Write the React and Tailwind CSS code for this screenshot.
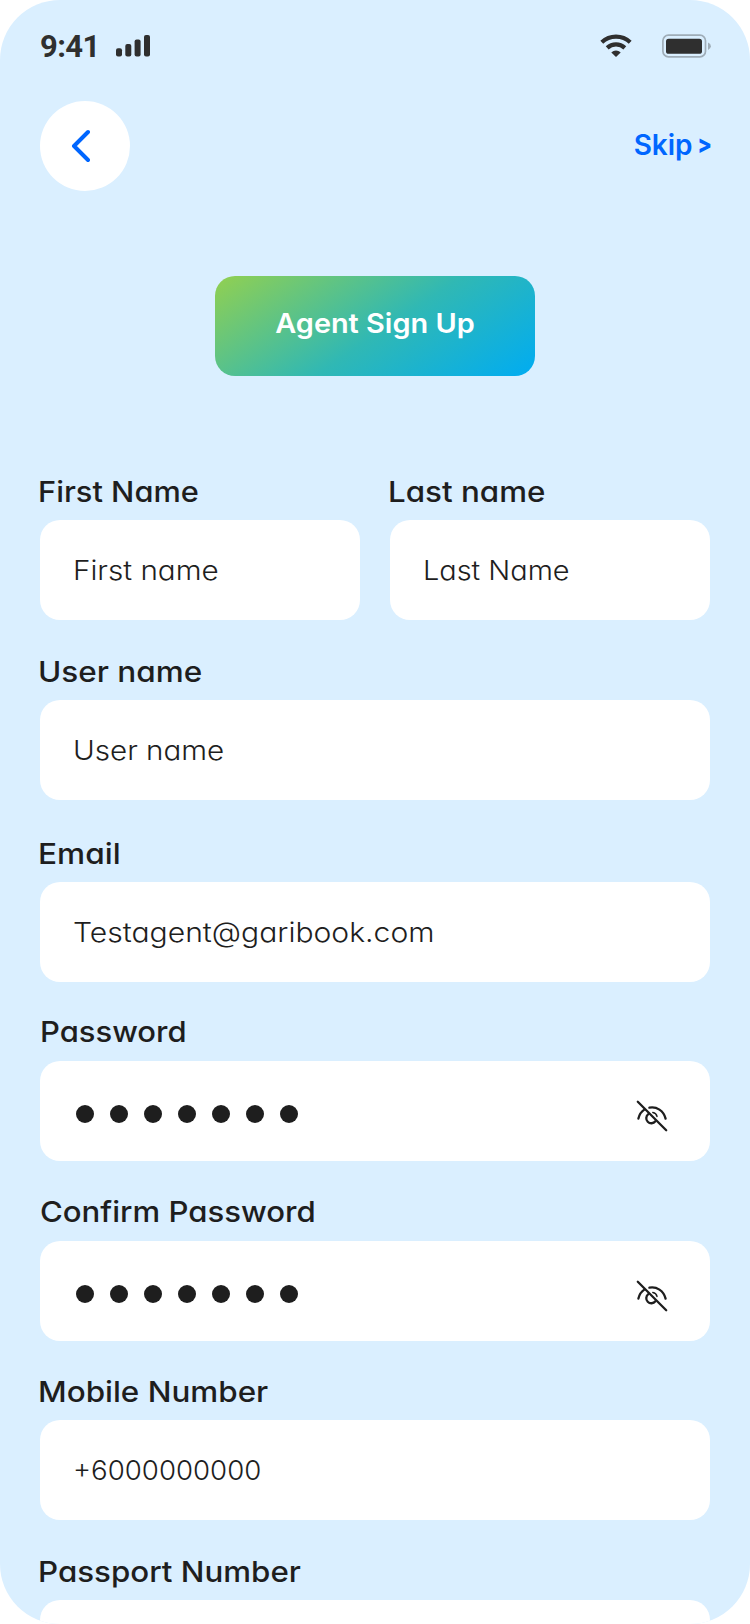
function StatusBar() {
  return (
    <header className="flex h-[46px] items-center justify-between text-[#2f2f2f]">
      <div className="flex items-center">
        <span className="w-[76px] font-['Roboto',sans-serif] text-[31px] font-bold leading-none tracking-[-0.6px]">9:41</span>
        <svg className="h-[22px] w-[35px]" viewBox="0 0 35 22" fill="currentColor">
          <rect x="0" y="13.3" width="6" height="8.2" rx="2" />
          <rect x="9.3" y="9" width="6" height="12.5" rx="2" />
          <rect x="18.6" y="4.6" width="6" height="16.9" rx="2" />
          <rect x="28" y="0" width="6" height="21.5" rx="2" />
        </svg>
      </div>
      <div className="-mr-px flex items-center gap-[30px]">
        <svg className="h-[24px] w-[32px]" viewBox="0 0 32 24" fill="none" stroke="currentColor" strokeWidth="4.2">
          <path d="M1.8 8.2A20.8 20.8 0 0 1 30.2 8.2" />
          <path d="M7.2 13.9A13 13 0 0 1 24.8 13.9" />
          <path d="M16 23L11.3 18.4A7 7 0 0 1 20.7 18.4Z" fill="currentColor" stroke="none" />
        </svg>
        <svg className="h-[24px] w-[49px]" viewBox="0 0 49 24" fill="none">
          <rect x="0.9" y="1.2" width="42.6" height="21.6" rx="5.5" stroke="#9fadb8" strokeWidth="1.7" />
          <rect x="4" y="4.8" width="36" height="15" rx="2.6" fill="#2f2f2f" />
          <path d="M46 8.4Q48.9 9.6 48.9 12.2T46 16Z" fill="#9fadb8" />
        </svg>
      </div>
    </header>
  );
}

function EyeOffIcon() {
  return (
    <svg className="h-8 w-8" viewBox="0 0 32 32" fill="none" stroke="#1e1e1e" strokeWidth="2.3" strokeLinecap="round">
      <path d="M1.8 1.8L30.2 30.2" />
      <path d="M2.4 18.6C3.2 14.8 5.4 11.5 8.6 9.4" />
      <path d="M13.4 7.7C20.6 6.3 27.6 10.6 29.6 18.6" />
      <path d="M12.3 14.1A5.1 5.1 0 1 0 19.4 21.3" />
      <path d="M16.8 12.4A5.2 5.2 0 0 1 21 16.4" strokeWidth="1.5" />
    </svg>
  );
}

function Field({ label, labelClass, gap = "gap-2", children }) {
  return (
    <div className={`flex min-w-0 flex-1 flex-col items-start ${gap}`}>
      <label className={`block h-10 origin-left whitespace-nowrap text-[29px] font-medium leading-10 ${labelClass}`}>{label}</label>
      <div className="flex h-[100px] w-full items-center justify-between rounded-[20px] bg-white pl-[33px] pr-[42px]">{children}</div>
    </div>
  );
}

function Value({ className, children }) {
  return <span className={`origin-left whitespace-nowrap text-[27.5px] font-light leading-10 ${className}`}>{children}</span>;
}

function Dots() {
  return (
    <>
      <div className="flex gap-4 pl-[3px] pt-[6px]">
        {[0, 1, 2, 3, 4, 5, 6].map((i) => (
          <i key={i} className="size-[18px] rounded-full bg-[#1e1e1e]" />
        ))}
      </div>
      <div className="pt-[10px]">
        <EyeOffIcon />
      </div>
    </>
  );
}

export default function App() {
  return (
    <main className="h-[1624px] w-[750px] overflow-hidden rounded-[60px] bg-[#daefff] px-10 pt-[23px] font-['Inter',sans-serif] text-[#1e1e1e] [font-feature-settings:'cv11']">
      <StatusBar />
      <nav className="mt-8 flex h-[90px] items-center justify-between text-[#0066ff]">
        <button className="flex size-[90px] items-center justify-center rounded-full bg-white pr-[10px]">
          <svg className="h-[34px] w-[20px]" viewBox="0 0 20 34" fill="none" stroke="currentColor" strokeWidth="4" strokeLinecap="round" strokeLinejoin="round">
            <path d="M18 3L4 17L18 31" />
          </svg>
        </button>
        <a className="-mr-[2px] flex items-center gap-[5px] whitespace-nowrap pb-[3px] text-[28px] font-semibold leading-10">
          <span>Skip</span>
          <span className="scale-y-[1.2] text-[21px] font-extrabold">&gt;</span>
        </a>
      </nav>
      <button className="mx-auto mt-[85px] flex h-[100px] w-[320px] items-center justify-center rounded-[20px] bg-[linear-gradient(146deg,#92d050_0%,#30b8b4_53%,#00acf2_100%)] pb-1 text-[27.5px] font-semibold text-white">
        <span className="scale-x-[1.05] whitespace-nowrap">Agent Sign Up</span>
      </button>
      <form className="mt-24 flex flex-col">
        <div className="flex gap-[30px]">
          <Field label="First Name" labelClass="-ml-[2px] scale-x-[1.062]">
            <Value className="scale-x-[1.077]">First name</Value>
          </Field>
          <Field label="Last name" labelClass="-ml-[2px] scale-x-[1.08]">
            <Value className="scale-x-[1.05]">Last Name</Value>
          </Field>
        </div>
        <div className="mt-8 flex">
          <Field label="User name" labelClass="-ml-[2px] scale-x-[1.086]">
            <Value className="scale-x-[1.075]">User name</Value>
          </Field>
        </div>
        <div className="mt-[34px] flex">
          <Field label="Email" labelClass="-ml-[2px] scale-x-[1.09]">
            <Value className="scale-x-[1.094]">Testagent@garibook.com</Value>
          </Field>
        </div>
        <div className="mt-[30px] flex">
          <Field label="Password" labelClass="scale-x-[1.068]" gap="gap-[9px]">
            <Dots />
          </Field>
        </div>
        <div className="mt-[31px] flex">
          <Field label="Confirm Password" labelClass="scale-x-[1.073]" gap="gap-[9px]">
            <Dots />
          </Field>
        </div>
        <div className="mt-[31px] flex">
          <Field label="Mobile Number" labelClass="-ml-[2px] scale-x-[1.083]">
            <Value className="scale-x-[1.005]">+6000000000</Value>
          </Field>
        </div>
        <div className="mt-8 flex">
          <Field label="Passport Number" labelClass="-ml-[2px] scale-x-[1.079]" />
        </div>
      </form>
    </main>
  );
}
